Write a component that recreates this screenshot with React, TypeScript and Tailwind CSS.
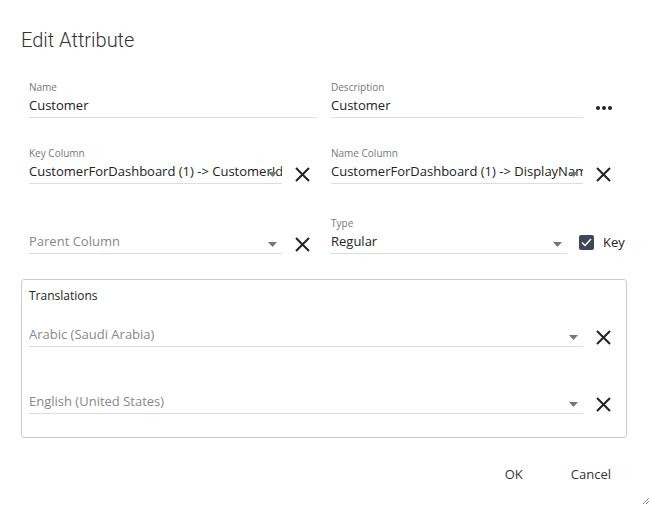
function Caret() {
  return (
    <svg className="absolute right-[5px] top-[12px]" width="9" height="5" viewBox="0 0 9 5">
      <path d="M0 0h9L4.5 5z" fill="#777" />
    </svg>
  )
}

function ClearIcon() {
  return (
    <svg width="15" height="15" viewBox="0 0 15 15">
      <path d="M1 1l13 13M14 1L1 14" stroke="#222" strokeWidth="2" />
    </svg>
  )
}

function Field({
  label,
  value,
  placeholder,
  select,
  className = '',
}: {
  label?: string
  value?: string
  placeholder?: string
  select?: boolean
  className?: string
}) {
  return (
    <div className={`flex min-w-0 shrink-0 flex-col ${className}`}>
      {label !== undefined && (
        <div className="h-[14px] text-[10px] leading-[14px] text-[#777]">{label}</div>
      )}
      <div className="relative h-[24px] overflow-hidden border-b border-[#ddd]">
        <div
          className={`whitespace-nowrap pt-[1px] text-[13px] leading-[20px] ${
            value ? 'text-[#222]' : 'text-[#888]'
          }`}
        >
          {value || placeholder}
        </div>
        {select && <Caret />}
      </div>
    </div>
  )
}

function Clear() {
  return (
    <div className="flex h-[24px] w-[40px] shrink-0 items-center justify-center pt-[4px]">
      <ClearIcon />
    </div>
  )
}

function App() {
  return (
    <main
      className="relative h-[506px] w-[651px] overflow-hidden bg-white"
      style={{ fontFamily: '"Open Sans", "Noto Sans", sans-serif' }}
    >
      <h1
        className="pl-[21px] pt-[27px] text-[20px] font-light leading-[26px] text-[#333]"
        style={{ fontFamily: 'Roboto, "Liberation Sans", sans-serif' }}
      >
        Edit Attribute
      </h1>

      {/* row 1 */}
      <div className="mt-[27px] grid grid-cols-2 gap-[14px] px-[29px] pr-[32px]">
        <Field label="Name" value="Customer" className="w-[288px]" />
        <div className="flex items-end">
          <Field label="Description" value="Customer" className="w-[252px]" />
          <div className="flex h-[24px] w-[42px] shrink-0 items-center justify-center gap-[2px] pt-[3px]">
            <span className="h-[4px] w-[4px] rounded-full bg-[#222]" />
            <span className="h-[4px] w-[4px] rounded-full bg-[#222]" />
            <span className="h-[4px] w-[4px] rounded-full bg-[#222]" />
          </div>
        </div>
      </div>

      {/* row 2 */}
      <div className="mt-[28px] grid grid-cols-2 gap-[14px] px-[29px] pr-[32px]">
        <div className="flex items-end">
          <Field
            label="Key Column"
            value="CustomerForDashboard (1) -> CustomerId"
            select
            className="w-[253px]"
          />
          <Clear />
        </div>
        <div className="flex items-end">
          <Field
            label="Name Column"
            value="CustomerForDashboard (1) -> DisplayName"
            select
            className="w-[252px]"
          />
          <Clear />
        </div>
      </div>

      {/* row 3 */}
      <div className="mt-[32px] grid grid-cols-2 gap-[14px] px-[29px] pr-[32px]">
        <div className="flex items-end">
          <Field placeholder="Parent Column" select className="w-[253px]" />
          <Clear />
        </div>
        <div className="flex items-end">
          <Field label="Type" value="Regular" select className="w-[236px]" />
          <div className="flex h-[24px] shrink-0 items-center pt-[1px]">
            <span className="ml-[12px] flex h-[15px] w-[15px] items-center justify-center rounded-[2px] bg-[#3f4859]">
              <svg width="11" height="9" viewBox="0 0 11 9">
                <path d="M1 4.5l3 3L10 1" fill="none" stroke="#fff" strokeWidth="1.4" />
              </svg>
            </span>
            <span className="ml-[9px] text-[13px] text-[#222]">Key</span>
          </div>
        </div>
      </div>

      {/* translations */}
      <section className="mx-[21px] mt-[25px] h-[159px] w-[606px] rounded-[3px] border border-[#ccc] pl-[7px] pt-[7px]">
        <div className="text-[12px] leading-[18px] text-[#222]">Translations</div>
        <div className="mt-[18px] flex items-end">
          <Field placeholder="Arabic (Saudi Arabia)" select className="w-[554px]" />
          <Clear />
        </div>
        <div className="mt-[43px] flex items-end">
          <Field placeholder="English (United States)" select className="w-[554px]" />
          <Clear />
        </div>
      </section>

      {/* actions */}
      <footer className="mt-[27px] flex justify-end gap-[48px] pr-[40px] text-[13px] leading-[18px] text-[#333]">
        <button>OK</button>
        <button>Cancel</button>
      </footer>

      <svg className="absolute bottom-[1px] right-[1px]" width="8" height="8" viewBox="0 0 8 8">
        <path d="M7 1L1 7M7 4L4 7" stroke="#999" strokeWidth="1" />
      </svg>
    </main>
  )
}

export default App
